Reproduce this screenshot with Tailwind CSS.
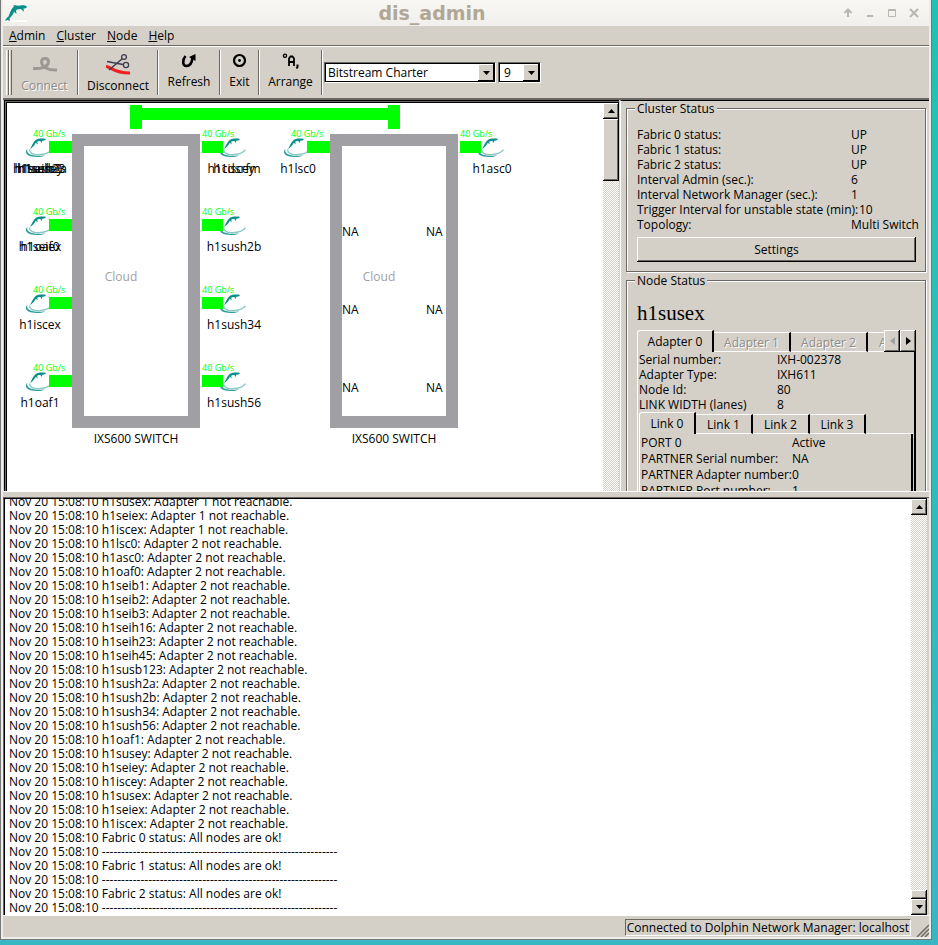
<!DOCTYPE html>
<html lang="en">
<head>
    <meta charset="UTF-8">
    <meta name="viewport" content="width=device-width, initial-scale=1.0">
    <title>dis_admin</title>
    <script src="https://cdn.jsdelivr.net/npm/@tailwindcss/browser@4"></script>
</head>
<body class="h-screen overflow-hidden bg-linear-to-b from-[#1fc2b4] to-[#38b6c4] pr-[7px] pb-[6px] font-['Open_Sans','Noto_Sans',sans-serif] text-[12px] leading-[15px] text-black">

    <!-- Shared drawings -->
    <svg class="hidden" aria-hidden="true">
        <symbol id="dolphin" viewBox="0 0 27 20">
            <path d="M5 11 C7 8 8 4 11 1.800 C13 .4 18 .3 20.500 .8 C21.500 1.500 20 2.500 17.500 2.800 L16.300 5 L15.500 3 C13.500 3 12.600 3.200 12.200 4 L12.800 6.500 L10.800 4.800 C9.500 7.500 7 10 5 11 Z" fill="#0a8f8a"/>
            <path d="M2.500 10.500 C-.5 14 1 17 5.500 18.300 C10.500 19.600 17 19.200 20.500 17.200 C15 18 8 18.200 4.500 16 C2 14.300 1.800 12.500 2.500 10.500 Z" fill="#2f9f9b"/>
            <path d="M4.800 11.500 C4 14.500 8 17 13.500 16.800 C19 16.600 24 15 26.500 11.800" fill="none" stroke="#8cc9c6" stroke-width="1.400"/>
        </symbol>
    </svg>

    <div class="ml-px flex h-full flex-col border-x-2 border-b-2 border-[#efedea] bg-[#d4d0c8] shadow-[0_0_0_1px_#777]">

        <!-- Title bar -->
        <header class="flex h-[26px] shrink-0 items-center bg-linear-to-b from-[#f8f7f4] to-[#f0efeb] pr-[8px] pl-[2px]">
            <svg class="h-[18px] w-[24px]" viewBox="0 0 24 18" aria-hidden="true">
                <path d="M0 16 h22 v3 h-22 Z" fill="#fff"/>
                <path d="M0 17 C1 14.500 2 13.500 3.500 12.500 C5 9 6 4.500 9 2.700 L8 1.700 C10 .8 12 1.200 13 1.800 C16 1 20 .8 22 2.800 C22 4 20 4.600 18.500 4.600 L19 7.800 L15.800 5 C12.500 5 11.500 5.800 11 6.600 L11.500 10 L9 7.800 C8 11 6 13 4.500 14.300 L5 17 L2.800 16 Z" fill="#0a8f8a"/>
            </svg>
            <h1 class="grow pr-[6px] text-center font-['DejaVu_Sans',sans-serif] text-[19px] leading-[24px] font-bold text-[#b0a894]">dis_admin</h1>
            <div class="flex gap-[8px] text-[#bab7b2]">
                <button aria-label="Shade" class="size-[14px]"><svg viewBox="0 0 14 14" fill="none" stroke="currentColor" stroke-width="2"><path d="M7 11 V4 M3.500 7 L7 3.500 L10.500 7"/></svg></button>
                <button aria-label="Minimize" class="size-[14px]"><svg viewBox="0 0 14 14" fill="none" stroke="currentColor" stroke-width="2"><path d="M4 10 H10"/></svg></button>
                <button aria-label="Maximize" class="size-[14px]"><svg viewBox="0 0 14 14" fill="none" stroke="currentColor"><path d="M3.500 3.500 H10.500 V10.500 H3.500 Z M3.500 4.500 H10.500"/></svg></button>
                <button aria-label="Close" class="size-[14px]"><svg viewBox="0 0 14 14" fill="none" stroke="currentColor" stroke-width="2"><path d="M3 3 L11 11 M11 3 L3 11"/></svg></button>
            </div>
        </header>

        <!-- Menu bar -->
        <nav class="flex h-[20px] shrink-0 items-center gap-[11px] border-b border-[#6b6864] pl-[6px]">
            <button><u>A</u>dmin</button>
            <button><u>C</u>luster</button>
            <button><u>N</u>ode</button>
            <button><u>H</u>elp</button>
        </nav>

        <!-- Toolbar -->
        <div class="flex h-[52px] shrink-0 items-stretch border-t border-white pt-[3px] pb-[3px] pl-[3px]">
            <div class="w-[3px] border-r border-l border-r-[#6b6864] border-l-white"></div>
            <div class="w-[3px] border-r border-l border-r-[#6b6864] border-l-white"></div>
            <button disabled class="flex w-[66px] flex-col items-center justify-start border-r border-[#6b6864] pt-[5px] text-[#8f8c87] [text-shadow:1px_1px_#fff]">
                <svg class="h-[20px] w-[26px]" viewBox="0 0 26 20" fill="none" stroke="#9c9994" stroke-width="3"><path d="M1 13.500 C9 14 16 12 16.500 7 C16.500 2.500 9.500 2.500 9.500 6.500 C9.500 12 16 15.500 25 15"/></svg>
                <span class="mt-[3px]">Connect</span>
            </button>
            <button class="flex w-[80px] flex-col items-center justify-start border-r border-l border-r-[#6b6864] border-l-white pt-[3px]">
                <svg class="h-[22px] w-[26px]" viewBox="0 0 26 22" fill="none">
                    <path d="M1 13.500 C6 13.500 8 20 25 20" stroke="#f02020" stroke-width="3"/>
                    <path d="M2 8.500 L18 11.500 M4 17 L17.500 5.500" stroke="#3d3d50" stroke-width="1.600"/>
                    <circle cx="19" cy="4" r="2.400" stroke="#3d3d50" stroke-width="1.300"/>
                    <circle cx="21" cy="12" r="2.600" stroke="#3d3d50" stroke-width="1.300"/>
                </svg>
                <span class="mt-[3px]">Disconnect</span>
            </button>
            <button class="flex w-[62px] flex-col items-center justify-start border-r border-l border-r-[#6b6864] border-l-white pt-[3px]">
                <svg class="h-[16px] w-[16px]" viewBox="0 0 16 16"><path d="M4.500 3 C1 7 1.500 13 5.500 13 C9 13 11 9 11.500 5" fill="none" stroke="#000" stroke-width="2.600"/><path d="M8 4 L14.500 1 L14.500 8 Z"/></svg>
                <span class="mt-[5px]">Refresh</span>
            </button>
            <button class="flex w-[39px] flex-col items-center justify-start border-r border-l border-r-[#6b6864] border-l-white pt-[3px]">
                <svg class="h-[16px] w-[16px]" viewBox="0 0 16 16"><circle cx="7.500" cy="7.500" r="5.500" fill="none" stroke="#000" stroke-width="2.200"/><circle cx="7.500" cy="7.500" r="1.400"/></svg>
                <span class="mt-[5px]">Exit</span>
            </button>
            <button class="flex w-[63px] flex-col items-center justify-start border-r border-l border-r-[#6b6864] border-l-white pt-[3px]">
                <svg class="h-[16px] w-[18px]" viewBox="0 0 18 16" fill="none" stroke="#000"><circle cx="3" cy="2.800" r="1.600" stroke-width="1.300"/><path d="M7 13 V5.500 L8.500 3.500 H10.500 L12 5.500 V13 M7 9 H12" stroke-width="1.800"/><path d="M15.500 11.500 V14 L14.500 15.500" stroke-width="2"/></svg>
                <span class="mt-[5px]">Arrange</span>
            </button>
            <div class="flex items-center gap-[2px] border-l border-white pl-px">
                <label class="relative flex h-[21px] w-[172px] border border-t-[#6b6864] border-r-white border-b-white border-l-[#6b6864]">
                    <select aria-label="Font" class="w-full appearance-none border border-black bg-white pl-[2px] leading-[16px] outline-none">
                        <option>Bitstream Charter</option>
                    </select>
                    <span class="pointer-events-none absolute top-px right-px flex h-[17px] w-[16px] items-center justify-center bg-[#d4d0c8] shadow-[inset_-1px_-1px_#000,inset_1px_1px_#fff]"><svg class="h-[4px] w-[7px]" viewBox="0 0 7 4"><path d="M0 0 H7 L3.500 4 Z"/></svg></span>
                </label>
                <label class="relative flex h-[21px] w-[43px] border border-t-[#6b6864] border-r-white border-b-white border-l-[#6b6864]">
                    <select aria-label="Font size" class="w-full appearance-none border border-black bg-white pl-[4px] leading-[16px] outline-none">
                        <option>9</option>
                    </select>
                    <span class="pointer-events-none absolute top-px right-px flex h-[17px] w-[16px] items-center justify-center bg-[#d4d0c8] shadow-[inset_-1px_-1px_#000,inset_1px_1px_#fff]"><svg class="h-[4px] w-[7px]" viewBox="0 0 7 4"><path d="M0 0 H7 L3.500 4 Z"/></svg></span>
                </label>
            </div>
        </div>

        <!-- Topology and status -->
        <main class="flex min-h-0 flex-[393] border-t-2 border-[#6b6864]">
            <div class="mx-px flex min-w-0 grow border-t border-l border-black bg-white pt-[2px] pl-[2px] shadow-[inset_1px_1px_#6b6864,inset_2px_2px_#000]">
                <svg class="h-full min-w-0 grow" fill="#000">
                    <!-- inter-switch link -->
                    <g fill="#00ff00">
                        <rect x="123" y="2" width="12" height="24"/>
                        <rect x="135" y="5" width="246" height="12"/>
                        <rect x="381" y="2" width="12" height="24"/>
                    </g>
                    <g>
                        <use href="#dolphin" x="18" y="35" width="27" height="20"/>
                        <use href="#dolphin" x="18" y="113" width="27" height="20"/>
                        <use href="#dolphin" x="18" y="191" width="27" height="20"/>
                        <use href="#dolphin" x="18" y="269" width="27" height="20"/>
                        <use href="#dolphin" x="212" y="35" width="27" height="20"/>
                        <use href="#dolphin" x="212" y="113" width="27" height="20"/>
                        <use href="#dolphin" x="212" y="191" width="27" height="20"/>
                        <use href="#dolphin" x="212" y="269" width="27" height="20"/>
                        <use href="#dolphin" x="276" y="35" width="27" height="20"/>
                        <use href="#dolphin" x="470" y="35" width="27" height="20"/>
                    </g>
                    <!-- ports -->
                    <g fill="#00ff00">
                        <rect x="42" y="38" width="23" height="12"/>
                        <rect x="42" y="116" width="23" height="12"/>
                        <rect x="42" y="194" width="23" height="12"/>
                        <rect x="42" y="272" width="23" height="12"/>
                        <rect x="195" y="38" width="21" height="12"/>
                        <rect x="195" y="116" width="21" height="12"/>
                        <rect x="195" y="194" width="21" height="12"/>
                        <rect x="195" y="272" width="21" height="12"/>
                        <rect x="300" y="38" width="23" height="12"/>
                        <rect x="453" y="38" width="21" height="12"/>
                    </g>
                    <g fill="#00ff00" class="text-[9px] font-medium">
                        <text x="26" y="34">40 Gb/s</text>
                        <text x="26" y="112">40 Gb/s</text>
                        <text x="26" y="190">40 Gb/s</text>
                        <text x="26" y="268">40 Gb/s</text>
                        <text x="195" y="34">40 Gb/s</text>
                        <text x="195" y="112">40 Gb/s</text>
                        <text x="195" y="190">40 Gb/s</text>
                        <text x="195" y="268">40 Gb/s</text>
                        <text x="284" y="34">40 Gb/s</text>
                        <text x="453" y="34">40 Gb/s</text>
                    </g>
                    <g fill="none" stroke="#a09fa4" stroke-width="12">
                        <rect x="71" y="37" width="116" height="282"/>
                        <rect x="329" y="37" width="116" height="282"/>
                    </g>
                    <g text-anchor="middle">
                        <text x="33" y="70">h1seih23</text>
                        <text x="33" y="70">h1seib2</text>
                        <text x="33" y="70">h1sush2a</text>
                        <text x="33" y="70">h1susey</text>
                        <text x="33" y="148">h1seiex</text>
                        <text x="33" y="148">h1oaf0</text>
                        <text x="33" y="226">h1iscex</text>
                        <text x="33" y="304">h1oaf1</text>
                        <text x="227" y="70">h1cdsrfm</text>
                        <text x="227" y="70">h1iscey</text>
                        <text x="227" y="148">h1sush2b</text>
                        <text x="227" y="226">h1sush34</text>
                        <text x="227" y="304">h1sush56</text>
                        <text x="291" y="70">h1lsc0</text>
                        <text x="485" y="70">h1asc0</text>
                        <text x="129" y="340">IXS600 SWITCH</text>
                        <text x="387" y="340">IXS600 SWITCH</text>
                    </g>
                    <g text-anchor="middle" fill="#a09fa4">
                        <text x="114" y="178">Cloud</text>
                        <text x="372" y="178">Cloud</text>
                    </g>
                    <text x="335" y="133">NA</text>
                    <text x="335" y="211">NA</text>
                    <text x="335" y="289">NA</text>
                    <text x="419" y="133">NA</text>
                    <text x="419" y="211">NA</text>
                    <text x="419" y="289">NA</text>
                </svg>
                <!-- scrollbar -->
                <div class="flex w-[16px] shrink-0 flex-col bg-[repeating-conic-gradient(#d4d0c8_0_25%,#fff_0_50%)] bg-size-[2px_2px]">
                    <button aria-label="Scroll up" class="flex h-[16px] items-center justify-center bg-[#d4d0c8] shadow-[inset_-1px_-1px_#000,inset_1px_1px_#fff,inset_-2px_-2px_#6b6864]"><svg class="h-[4px] w-[7px]" viewBox="0 0 7 4"><path d="M0 4 H7 L3.500 0 Z"/></svg></button>
                    <div class="h-[62px] bg-[#d4d0c8] shadow-[inset_-1px_-1px_#000,inset_1px_1px_#fff,inset_-2px_-2px_#6b6864]"></div>
                </div>
            </div>

            <aside class="flex w-[309px] shrink-0 flex-col gap-[8px] overflow-hidden border-t border-l border-t-black border-l-white pt-[7px] pr-[3px] pl-[5px]">
                <section class="h-[164px] shrink-0 border border-[#6b6864] pr-[9px] pl-[10px] shadow-[inset_1px_1px_#fff,1px_1px_#fff]">
                    <h2 class="-mt-[8px] -ml-[2px] w-fit bg-[#d4d0c8] px-[2px]">Cluster Status</h2>
                    <table class="mt-[11px] w-full table-fixed whitespace-nowrap">
                        <tr><td>Fabric 0 status:</td><td class="w-[65px]">UP</td></tr>
                        <tr><td>Fabric 1 status:</td><td>UP</td></tr>
                        <tr><td>Fabric 2 status:</td><td>UP</td></tr>
                        <tr><td>Interval Admin (sec.):</td><td>6</td></tr>
                        <tr><td>Interval Network Manager (sec.):</td><td>1</td></tr>
                        <tr><td>Trigger Interval for unstable state (min):</td><td class="pl-[8px]">10</td></tr>
                        <tr><td>Topology:</td><td>Multi Switch</td></tr>
                    </table>
                    <button class="mt-[5px] h-[25px] w-full shadow-[inset_-1px_-1px_#000,inset_1px_1px_#fff,inset_-2px_-2px_#6b6864]">Settings</button>
                </section>

                <section class="min-h-0 grow border border-b-0 border-[#6b6864] pr-[9px] pl-[10px] shadow-[inset_1px_1px_#fff,1px_0_#fff]">
                    <h2 class="-mt-[8px] -ml-[2px] w-fit bg-[#d4d0c8] px-[2px]">Node Status</h2>
                    <h3 class="mt-[12px] font-['Liberation_Serif',serif] text-[21px] leading-[26px]">h1susex</h3>
                    <div class="mt-[4px] flex items-end overflow-hidden" role="tablist">
                        <button role="tab" class="h-[22px] w-[77px] shrink-0 rounded-tl-[3px] border-t border-r-2 border-l border-t-white border-r-black border-l-white">Adapter 0</button>
                        <button role="tab" disabled class="h-[20px] w-[77px] shrink-0 border-y border-r-2 border-y-white border-r-black text-[#8f8c87] [text-shadow:1px_1px_#fff]">Adapter 1</button>
                        <button role="tab" disabled class="h-[20px] w-[77px] shrink-0 border-y border-r-2 border-y-white border-r-black text-[#8f8c87] [text-shadow:1px_1px_#fff]">Adapter 2</button>
                        <button role="tab" disabled class="h-[20px] min-w-0 grow overflow-hidden border-y border-white pl-[11px] text-left text-[#8f8c87] [text-shadow:1px_1px_#fff]">A</button>
                        <button aria-label="Previous tabs" disabled class="flex h-[22px] w-[16px] shrink-0 items-center justify-center shadow-[inset_-1px_-1px_#000,inset_1px_1px_#fff,inset_-2px_-2px_#6b6864]"><svg class="h-[8px] w-[5px]" viewBox="0 0 5 8"><path d="M5 0 V8 L0 4 Z" fill="#a09fa4"/></svg></button>
                        <button aria-label="Next tabs" class="flex h-[22px] w-[16px] shrink-0 items-center justify-center shadow-[inset_-1px_-1px_#000,inset_1px_1px_#fff,inset_-2px_-2px_#6b6864]"><svg class="h-[8px] w-[5px]" viewBox="0 0 5 8"><path d="M0 0 V8 L5 4 Z"/></svg></button>
                    </div>
                    <div class="border-r-2 border-l border-r-black border-l-white pr-px pl-px">
                        <table class="w-full">
                            <tr><td>Serial number:</td><td class="w-[136px]">IXH-002378</td></tr>
                            <tr><td>Adapter Type:</td><td>IXH611</td></tr>
                            <tr><td>Node Id:</td><td>80</td></tr>
                            <tr><td>LINK WIDTH (lanes)</td><td>8</td></tr>
                        </table>
                        <div class="flex items-end" role="tablist">
                            <button role="tab" class="h-[22px] w-[57px] rounded-tl-[3px] border-t border-r-2 border-l border-t-white border-r-black border-l-white">Link 0</button>
                            <button role="tab" class="h-[20px] w-[57px] border-y border-r-2 border-y-white border-r-black">Link 1</button>
                            <button role="tab" class="h-[20px] w-[57px] border-y border-r-2 border-y-white border-r-black">Link 2</button>
                            <button role="tab" class="h-[20px] w-[56px] border-y border-r-2 border-y-white border-r-black">Link 3</button>
                            <span class="grow border-b border-white"></span>
                        </div>
                        <div class="border-r-2 border-l border-r-black border-l-white pt-px pl-px">
                            <table class="w-full leading-[16px]">
                                <tr><td>PORT 0</td><td class="w-[119px]">Active</td></tr>
                                <tr><td>PARTNER Serial number:</td><td>NA</td></tr>
                                <tr><td class="whitespace-nowrap">PARTNER Adapter number:</td><td>0</td></tr>
                                <tr><td>PARTNER Port number:</td><td>1</td></tr>
                            </table>
                        </div>
                    </div>
                </section>
            </aside>
        </main>

        <div class="h-[7px] shrink-0 border-t border-b border-t-white border-b-[#6b6864] bg-[#d4d0c8]"></div>

        <!-- Log -->
        <section class="mr-[2px] flex min-h-0 flex-[418] border-t border-l border-t-black border-l-[#6b6864] bg-white shadow-[inset_1px_0_#000]">
            <div class="flex min-w-0 grow flex-col justify-end overflow-hidden pl-[5px] leading-[14px] whitespace-pre">
                <p>Nov 20 15:08:10 h1susex: Adapter 1 not reachable.</p>
                <p>Nov 20 15:08:10 h1seiex: Adapter 1 not reachable.</p>
                <p>Nov 20 15:08:10 h1iscex: Adapter 1 not reachable.</p>
                <p>Nov 20 15:08:10 h1lsc0: Adapter 2 not reachable.</p>
                <p>Nov 20 15:08:10 h1asc0: Adapter 2 not reachable.</p>
                <p>Nov 20 15:08:10 h1oaf0: Adapter 2 not reachable.</p>
                <p>Nov 20 15:08:10 h1seib1: Adapter 2 not reachable.</p>
                <p>Nov 20 15:08:10 h1seib2: Adapter 2 not reachable.</p>
                <p>Nov 20 15:08:10 h1seib3: Adapter 2 not reachable.</p>
                <p>Nov 20 15:08:10 h1seih16: Adapter 2 not reachable.</p>
                <p>Nov 20 15:08:10 h1seih23: Adapter 2 not reachable.</p>
                <p>Nov 20 15:08:10 h1seih45: Adapter 2 not reachable.</p>
                <p>Nov 20 15:08:10 h1susb123: Adapter 2 not reachable.</p>
                <p>Nov 20 15:08:10 h1sush2a: Adapter 2 not reachable.</p>
                <p>Nov 20 15:08:10 h1sush2b: Adapter 2 not reachable.</p>
                <p>Nov 20 15:08:10 h1sush34: Adapter 2 not reachable.</p>
                <p>Nov 20 15:08:10 h1sush56: Adapter 2 not reachable.</p>
                <p>Nov 20 15:08:10 h1oaf1: Adapter 2 not reachable.</p>
                <p>Nov 20 15:08:10 h1susey: Adapter 2 not reachable.</p>
                <p>Nov 20 15:08:10 h1seiey: Adapter 2 not reachable.</p>
                <p>Nov 20 15:08:10 h1iscey: Adapter 2 not reachable.</p>
                <p>Nov 20 15:08:10 h1susex: Adapter 2 not reachable.</p>
                <p>Nov 20 15:08:10 h1seiex: Adapter 2 not reachable.</p>
                <p>Nov 20 15:08:10 h1iscex: Adapter 2 not reachable.</p>
                <p>Nov 20 15:08:10 Fabric 0 status: All nodes are ok!</p>
                <p>Nov 20 15:08:10 -------------------------------------------------------------</p>
                <p>Nov 20 15:08:10 Fabric 1 status: All nodes are ok!</p>
                <p>Nov 20 15:08:10 -------------------------------------------------------------</p>
                <p>Nov 20 15:08:10 Fabric 2 status: All nodes are ok!</p>
                <p>Nov 20 15:08:10 -------------------------------------------------------------</p>
            </div>
            <div class="flex w-[16px] shrink-0 flex-col bg-[repeating-conic-gradient(#d4d0c8_0_25%,#fff_0_50%)] bg-size-[2px_2px]">
                <button aria-label="Scroll up" class="flex h-[16px] items-center justify-center bg-[#d4d0c8] shadow-[inset_-1px_-1px_#000,inset_1px_1px_#fff,inset_-2px_-2px_#6b6864]"><svg class="h-[4px] w-[7px]" viewBox="0 0 7 4"><path d="M0 4 H7 L3.500 0 Z"/></svg></button>
                <div class="mt-auto h-[9px] bg-[#d4d0c8] shadow-[inset_-1px_-1px_#000,inset_1px_1px_#fff,inset_-2px_-2px_#6b6864]"></div>
                <button aria-label="Scroll down" class="flex h-[16px] items-center justify-center bg-[#d4d0c8] shadow-[inset_-1px_-1px_#000,inset_1px_1px_#fff,inset_-2px_-2px_#6b6864]"><svg class="h-[4px] w-[7px]" viewBox="0 0 7 4"><path d="M0 0 H7 L3.500 4 Z"/></svg></button>
            </div>
        </section>

        <!-- Status bar -->
        <footer class="flex h-[22px] shrink-0 items-end justify-end gap-[5px] border-t border-white">
            <p class="mb-px border border-t-[#6b6864] border-r-white border-b-white border-l-[#6b6864] px-px">Connected to Dolphin Network Manager: localhost</p>
            <svg class="size-[13px]" viewBox="0 0 13 13" fill="none" stroke="#6b6864" stroke-width="1.500"><path d="M1 13 L13 1 M5 13 L13 5 M9 13 L13 9"/></svg>
        </footer>
    </div>
</body>
</html>
